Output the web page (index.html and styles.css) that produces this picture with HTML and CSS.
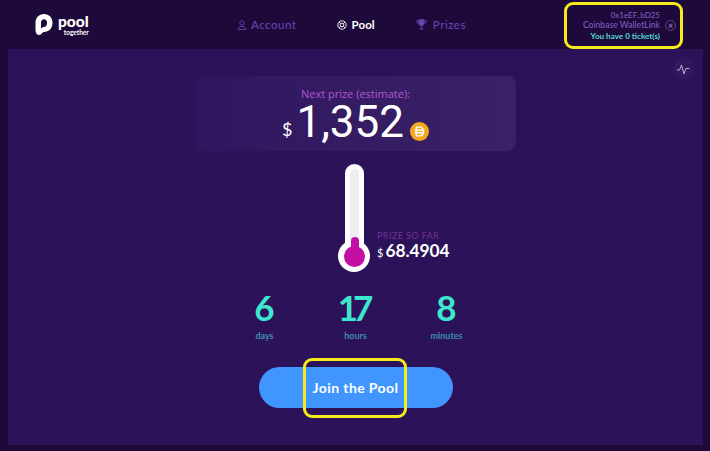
FILE: index.html
```html
<!DOCTYPE html>
<html>
<head>
    <meta charset="UTF-8">
    <title>PoolTogether</title>
    <link rel="stylesheet" href="styles.css">
</head>
<body>
<div class="header">
    <div class="logo">
        <svg class="logo-mark" width="18" height="21" viewBox="0 0 18 21">
            <path fill="#fff" fill-rule="evenodd" d="M9 0c5 0 8.500 3.500 8.500 8.800 0 5.700-3.700 9.200-8.500 9.200-.8 0-1.300.3-1.800 1-.8 1.200-1.700 2-3 2-2 0-3.700-2-3.700-5V8.800C.5 3.500 4 0 9 0zM9 5.300c-1.800 0-3 1.400-3 3.200v5c0 .6.700.9 1.100.4.400-.5.900-.9 1.900-.9 1.900 0 3.100-1.900 3.100-4.300C12.100 6.700 10.800 5.300 9 5.300z"/>
        </svg>
        <div class="logo-text">
            <div class="logo-pool">pool</div>
            <div class="logo-sub">together</div>
        </div>
    </div>
    <div class="nav">
        <a class="nav-item">
            <svg width="10" height="10" viewBox="0 0 10 10" fill="none" stroke="currentColor" stroke-width="0.9"><circle cx="5" cy="3" r="2.200"/><path d="M1 9.500c0-2.200 1.600-3 4-3s4 .8 4 3z"/></svg>
            Account
        </a>
        <a class="nav-item active">
            <svg width="10" height="10" viewBox="0 0 10 10" fill="none" stroke="currentColor" stroke-width="0.9"><circle cx="5" cy="5" r="4.200"/><circle cx="5" cy="5" r="1.900"/><path d="M2 2l1.600 1.600M8 2L6.400 3.600M2 8l1.600-1.600M8 8L6.400 6.400"/></svg>
            Pool
        </a>
        <a class="nav-item prizes">
            <svg width="11" height="11" viewBox="0 0 11 11" fill="none" stroke="currentColor" stroke-width="1"><path d="M3 .8h5v3.400c0 1.500-1 2.600-2.500 2.600S3 5.700 3 4.200z" fill="currentColor"/><path d="M3 1.800H.8c0 2 .8 3 2.500 3.200M8 1.800h2.200c0 2-.8 3-2.500 3.200M5.500 7v2.500M3.500 10h4"/></svg>
            Prizes
        </a>
    </div>
    <div class="wallet">
        <div class="wallet-info">
            <div class="address">0x1eEF..bD25</div>
            <div>Coinbase WalletLink</div>
            <div class="tickets">You have 0 ticket(s)</div>
        </div>
        <div class="wallet-close">×</div>
        <div class="highlight highlight-wallet"></div>
    </div>
</div>

<div class="panel">
    <div class="activity">
        <svg width="13" height="11" viewBox="0 0 13 11" fill="none" stroke="#b9b0c9" stroke-width="1"><path d="M0 6h2.500L4.500 1l2.500 9 2-5.500h3.500"/></svg>
    </div>

    <div class="prize-card">
        <div class="prize-label">Next prize (estimate):</div>
        <div class="prize-row">
            <span class="prize-dollar">$</span>
            <span class="prize-amount">1,352</span>
            <svg class="dai" width="19" height="19" viewBox="0 0 18 18">
                <circle cx="9" cy="9" r="9" fill="#f4a81d"/>
                <path fill="none" stroke="#fff" stroke-width="1.300" d="M6 4.800h3.200c2.300 0 3.500 1.800 3.500 4.200s-1.200 4.200-3.500 4.200H6zM4.500 7.800h9M4.500 10.200h9"/>
            </svg>
        </div>
    </div>

    <div class="meter-row">
        <div class="thermometer">
            <div class="tube"></div>
            <div class="bulb"><div class="bulb-fill"></div></div>
            <div class="neck"></div>
        </div>
        <div class="so-far">
            <div class="so-far-label">PRIZE SO FAR</div>
            <div class="so-far-value"><span class="so-far-dollar">$</span>68.4904</div>
        </div>
    </div>

    <div class="countdown">
        <div class="count-col"><div class="count-num">6</div><div class="count-unit">days</div></div>
        <div class="count-col"><div class="count-num tight">17</div><div class="count-unit">hours</div></div>
        <div class="count-col"><div class="count-num">8</div><div class="count-unit">minutes</div></div>
    </div>

    <div class="join-wrap">
        <button type="button" class="join">Join the Pool</button>
        <div class="highlight highlight-join"></div>
    </div>
</div>
</body>
</html>
```
FILE: styles.css
```css
* {
    padding: 0;
    margin: 0;
    box-sizing: border-box;
}

body {
    width: 710px;
    height: 451px;
    overflow: hidden;
    background-color: #1e0a3a;
    font-family: "Lato", "Noto Sans", sans-serif;
    color: #fff;
}

.header {
    height: 49px;
    display: flex;
    align-items: center;
    position: relative;
}

.logo {
    display: flex;
    align-items: center;
    gap: 5px;
    margin-left: 35px;
    width: 202px;
}

.logo-text {
    text-align: right;
}

.logo-pool {
    font-size: 15.500px;
    font-weight: 900;
    line-height: 15px;
}

.logo-sub {
    font-size: 6.500px;
    font-weight: 700;
    line-height: 7px;
}

.nav {
    display: flex;
    gap: 41px;
    font-size: 11.500px;
    letter-spacing: 0.5px;
}

.nav-item {
    display: flex;
    align-items: center;
    gap: 4px;
    color: #6542ae;
    font-weight: 500;
}

.nav-item.active {
    color: #fff;
    font-weight: 700;
    letter-spacing: 0.1px;
}

.prizes {
    gap: 6px;
}

.wallet {
    position: absolute;
    left: 564px;
    top: 2px;
    width: 119px;
    height: 47px;
    display: flex;
    align-items: center;
    justify-content: flex-end;
    gap: 5px;
    padding-right: 7px;
}

.wallet-info {
    text-align: right;
    font-size: 8.600px;
    line-height: 10.500px;
    color: #7f5cc0;
    font-weight: 500;
}

.address {
    font-size: 8px;
}

.tickets {
    color: #4fd8d0;
    font-size: 8.100px;
    font-weight: 700;
}

.wallet-close {
    width: 11px;
    height: 11px;
    border: 1px solid #5b3f96;
    border-radius: 50%;
    color: #a48ad6;
    font-size: 9px;
    line-height: 9px;
    text-align: center;
}

.highlight {
    position: absolute;
    border: 3px solid #f7ea1c;
    border-radius: 9px;
    pointer-events: none;
}

.highlight-wallet {
    inset: 0;
}

.panel {
    position: relative;
    width: 695px;
    height: 396px;
    margin-left: 8px;
    background-color: #2c1259;
    display: flex;
    flex-direction: column;
    align-items: center;
    padding-top: 27px;
}

.activity {
    position: absolute;
    right: 9px;
    top: 10px;
    width: 21px;
    height: 21px;
    border-radius: 50%;
    background-color: #32195f;
    display: flex;
    align-items: center;
    justify-content: center;
}

.prize-card {
    width: 320px;
    height: 75px;
    border-radius: 9px;
    background: linear-gradient(90deg, #2f1660, #3a2266);
    text-align: center;
    padding-top: 11px;
}

.prize-label {
    font-size: 11px;
    line-height: 14px;
    color: #b455d1;
    font-family: "Open Sans", sans-serif;
}

.prize-row {
    display: flex;
    align-items: center;
    justify-content: center;
    height: 42px;
}

.prize-dollar {
    font-size: 18px;
    margin-right: 4px;
    margin-top: 14px;
}

.prize-amount {
    font-family: "Roboto", sans-serif;
    font-size: 44px;
    line-height: 42px;
    font-weight: 400;
}

.dai {
    margin-left: 6px;
    margin-top: 18px;
}

.meter-row {
    display: flex;
    align-items: flex-end;
    gap: 7px;
    margin-top: 13px;
    margin-left: 114px;
}

.thermometer {
    position: relative;
    width: 32px;
    height: 108px;
}

.tube {
    position: absolute;
    left: 7px;
    top: 0;
    width: 19px;
    height: 90px;
    border: 5px solid #fff;
    border-radius: 10px 10px 0 0;
    background-color: #ededf0;
}

.neck {
    position: absolute;
    left: 13px;
    top: 73px;
    width: 8px;
    height: 14px;
    border-radius: 4px 4px 0 0;
    background-color: #c30fa3;
}

.bulb {
    position: absolute;
    left: 0;
    bottom: 0;
    width: 32px;
    height: 32px;
    border-radius: 50%;
    background-color: #fff;
    padding: 5.500px;
}

.bulb-fill {
    width: 21px;
    height: 21px;
    border-radius: 50%;
    background-color: #c30fa3;
}

.so-far {
    width: 110px;
    margin-bottom: 9px;
}

.so-far-label {
    font-size: 9px;
    line-height: 11px;
    letter-spacing: 0.4px;
    color: #6b2f8f;
    font-weight: 500;
}

.so-far-value {
    font-size: 17.300px;
    line-height: 20px;
    font-weight: 700;
}

.so-far-dollar {
    font-size: 11px;
    margin-right: 2px;
    font-weight: 400;
}

.countdown {
    display: flex;
    justify-content: center;
    margin-top: 16px;
}

.count-col {
    width: 91px;
    text-align: center;
}

.count-num {
    font-size: 35px;
    line-height: 38px;
    font-weight: 700;
    color: #3fe6cf;
}

.count-num.tight {
    letter-spacing: -5px;
    padding-right: 5px;
}

.count-unit {
    font-size: 9px;
    line-height: 11px;
    margin-top: 4px;
    font-weight: 700;
    color: #3f8ea6;
}

.join-wrap {
    position: relative;
    margin-top: 26px;
}

.join {
    display: block;
    width: 194px;
    height: 41px;
    border: none;
    border-radius: 21px;
    background-color: #4095ff;
    color: #fff;
    font-family: "Lato", sans-serif;
    font-size: 14px;
    font-weight: 700;
    letter-spacing: 0.4px;
    cursor: pointer;
}

.highlight-join {
    left: 44px;
    top: -9px;
    width: 104px;
    height: 60px;
}
```
